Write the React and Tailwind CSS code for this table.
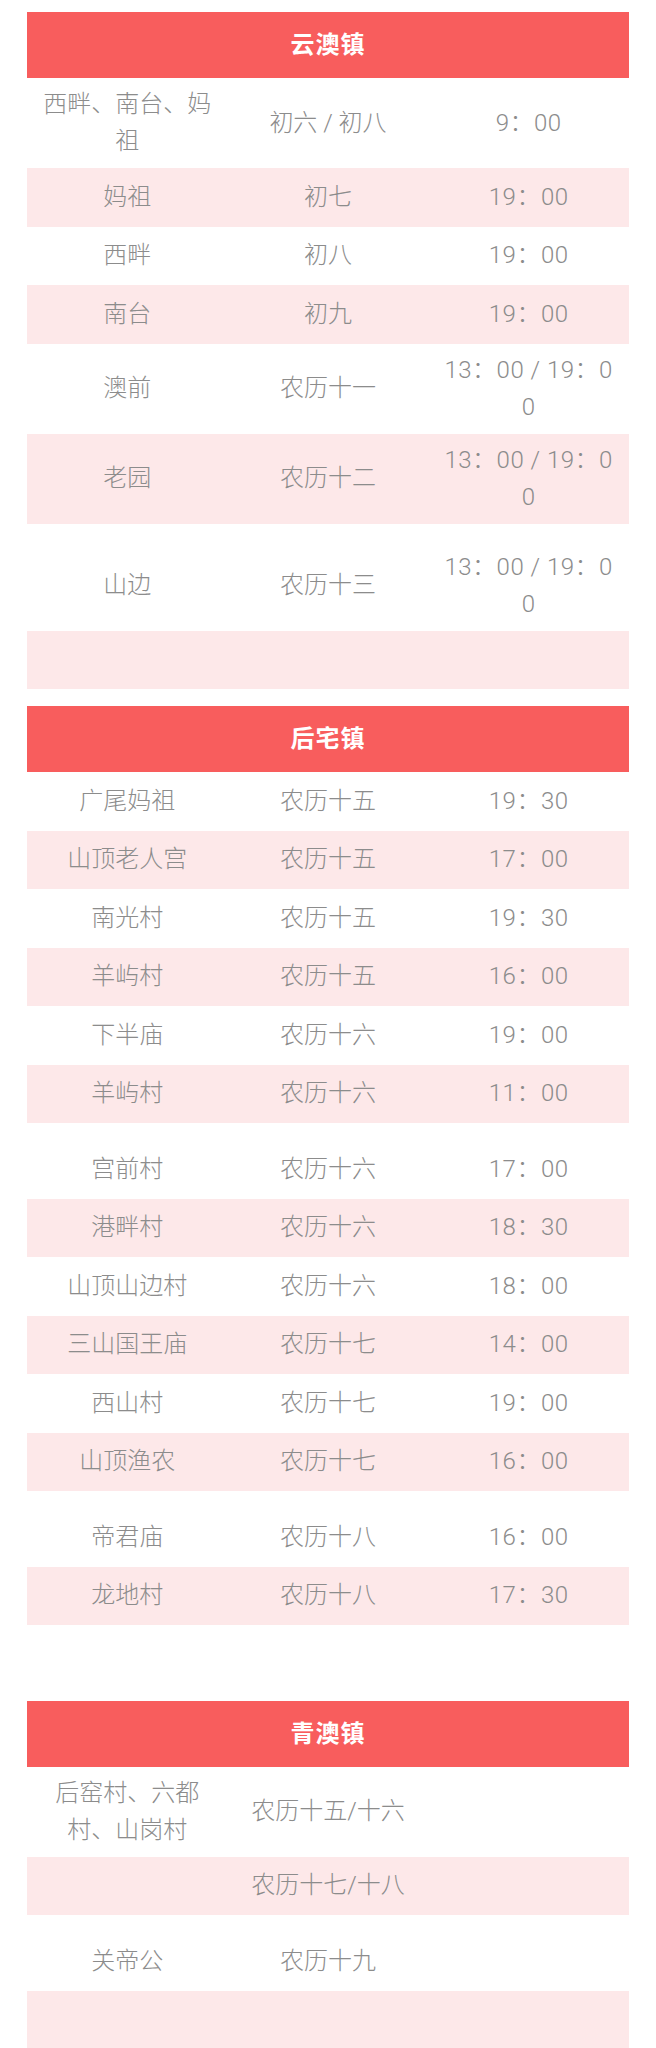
import React from "react";

const sections = [
  {
    town: "云澳镇",
    rows: [
      { place: "西畔、南台、妈祖", day: "初六 / 初八", time: "9：00" },
      { place: "妈祖", day: "初七", time: "19：00" },
      { place: "西畔", day: "初八", time: "19：00" },
      { place: "南台", day: "初九", time: "19：00" },
      { place: "澳前", day: "农历十一", time: "13：00 / 19：00" },
      { place: "老园", day: "农历十二", time: "13：00 / 19：00" },
      { place: "山边", day: "农历十三", time: "13：00 / 19：00", tall: true },
      { place: "", day: "", time: "" },
    ],
  },
  {
    town: "后宅镇",
    rows: [
      { place: "广尾妈祖", day: "农历十五", time: "19：30" },
      { place: "山顶老人宫", day: "农历十五", time: "17：00" },
      { place: "南光村", day: "农历十五", time: "19：30" },
      { place: "羊屿村", day: "农历十五", time: "16：00" },
      { place: "下半庙", day: "农历十六", time: "19：00" },
      { place: "羊屿村", day: "农历十六", time: "11：00" },
      { place: "宫前村", day: "农历十六", time: "17：00", tall: true },
      { place: "港畔村", day: "农历十六", time: "18：30" },
      { place: "山顶山边村", day: "农历十六", time: "18：00" },
      { place: "三山国王庙", day: "农历十七", time: "14：00" },
      { place: "西山村", day: "农历十七", time: "19：00" },
      { place: "山顶渔农", day: "农历十七", time: "16：00" },
      { place: "帝君庙", day: "农历十八", time: "16：00", tall: true },
      { place: "龙地村", day: "农历十八", time: "17：30" },
      { place: "", day: "", time: "" },
    ],
  },
  {
    town: "青澳镇",
    rows: [
      { place: "后窑村、六都村、山岗村", day: "农历十五/十六", time: "" },
      { place: "", day: "农历十七/十八", time: "" },
      { place: "关帝公", day: "农历十九", time: "", tall: true },
      { place: "", day: "", time: "" },
      { place: "", day: "", time: "" },
    ],
  },
];

const Row = ({ row, index }) => {
  return (
    <div className={index % 2 === 1 ? "bg-[#fde8e9]" : "bg-white"}>
      {row.tall && <div className="h-[17px]" />}
      <div className="grid grid-cols-3 items-center min-h-[58.5px] py-2 text-center text-[24px] leading-[37px] font-light text-[#8c8c8c]">
        <div className="px-[14px]">{row.place}</div>
        <div className="px-[14px]">{row.day}</div>
        <div className="px-[14px] break-all tracking-[0.5px]">{row.time}</div>
      </div>
    </div>
  );
};

export default function App() {
  return (
    <div
      className="bg-white min-h-screen pt-3 px-[27px] pb-10"
      style={{ fontFamily: 'Roboto, "Noto Sans CJK SC", sans-serif' }}
    >
      {sections.map((section) => (
        <div key={section.town} className="mb-[17px]">
          <div className="h-[66px] flex items-center justify-center bg-[#f85d5d] text-white text-[24px] font-bold tracking-[1px]">
            {section.town}
          </div>
          {section.rows.map((row, i) => (
            <Row key={i} row={row} index={i} />
          ))}
        </div>
      ))}
    </div>
  );
}
